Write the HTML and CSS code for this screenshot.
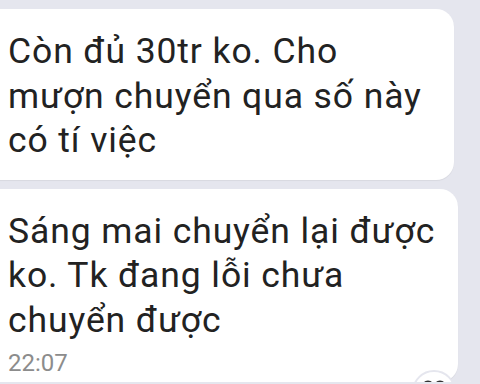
FILE: index.html
```html
<!DOCTYPE html>
<html lang="vi">
<head>
    <meta charset="UTF-8">
    <meta name="viewport" content="width=device-width, initial-scale=1.0">
    <title>Tin nhắn</title>
    <link rel="stylesheet" href="styles.css">
</head>
<body>
    <div class="chat">
        <div class="bubble bubble-first">
            <div class="message">Còn đủ 30tr ko. Cho<br>mượn chuyển qua số này<br>có tí việc</div>
        </div>
        <div class="bubble bubble-last">
            <div class="message">Sáng mai chuyển lại được<br>ko. Tk đang lỗi chưa<br>chuyển được</div>
            <div class="time">22:07</div>
            <div class="reaction">
                <svg width="24" height="12" viewBox="0 0 24 12">
                    <ellipse cx="6" cy="6" rx="4.5" ry="3.5" fill="#333"/>
                    <ellipse cx="18" cy="6" rx="4.5" ry="3.5" fill="#333"/>
                </svg>
            </div>
        </div>
    </div>
</body>
</html>
```

FILE: styles.css
```css
body {
    margin: 0;
    background-color: #e5e6ee;
    font-family: Roboto, "Noto Sans", sans-serif;
    color: #222;
    overflow: hidden;
}
.chat {
    display: flex;
    flex-direction: column;
    gap: 9px;
    padding-top: 9px;
}
.bubble {
    position: relative;
    box-sizing: border-box;
    background: #fff;
    border-radius: 18px;
    margin-left: -20px;
    padding: 20px 10px 0 28px;
    box-shadow: 0 1px 1px rgba(0, 0, 0, 0.06);
}
.bubble-first {
    width: 474px;
    padding-bottom: 17px;
}
.bubble-last {
    width: 478px;
    height: 193px;
}
.message {
    font-size: 35.5px;
    line-height: 44.5px;
    letter-spacing: 0.9px;
    white-space: nowrap;
}
.time {
    font-size: 24px;
    line-height: 28px;
    color: #8c8c8c;
    margin-top: 7px;
}
.reaction {
    position: absolute;
    right: 2px;
    bottom: -32px;
    width: 44px;
    height: 44px;
    border: 2px solid #e5e6ee;
    border-radius: 50%;
    background: #fff;
    display: flex;
    justify-content: center;
    align-items: flex-start;
    padding-top: 6px;
    box-sizing: border-box;
}
```
